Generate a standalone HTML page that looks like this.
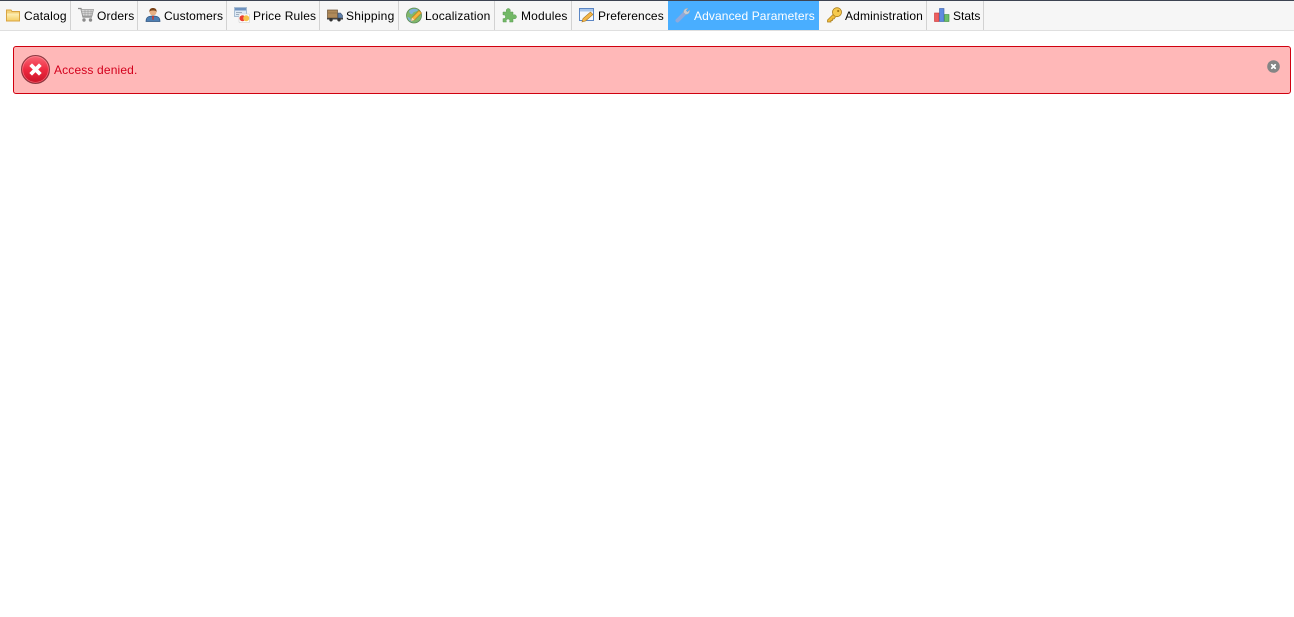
<!DOCTYPE html>
<html><head><meta charset="utf-8"><style>
html,body{margin:0;padding:0;background:#fff;width:1294px;height:617px;overflow:hidden;font-family:"Liberation Sans",sans-serif}
#bar{position:absolute;left:0;top:0;width:1294px;background:#f6f6f6;border-top:1px solid #3d4452;border-bottom:1px solid #dfdfdf;box-sizing:content-box;height:29px}
.t{position:absolute;top:9px;font-size:12px;line-height:14px;color:#000;white-space:nowrap;letter-spacing:.12px}
.s{position:absolute;top:1px;width:1px;height:29px;background:#d2d2d2}
#act{position:absolute;left:668px;top:1px;width:151px;height:29px;background:#49aeff}
svg{position:absolute}
#err{position:absolute;left:13px;top:46px;width:1278px;height:48px;box-sizing:border-box;background:#ffb8b8;border:1px solid #d0000f;border-radius:3px}
#msg{position:absolute;left:54px;top:63px;font-size:12px;line-height:15px;color:#d3001c;white-space:nowrap;letter-spacing:.15px}
</style></head><body>
<div id="bar"></div>
<div id="act"></div>
<div class="s" style="left:70px"></div><div class="s" style="left:137px"></div><div class="s" style="left:226px"></div><div class="s" style="left:319px"></div><div class="s" style="left:398px"></div><div class="s" style="left:494px"></div><div class="s" style="left:571px"></div><div class="s" style="left:926px"></div><div class="s" style="left:983px"></div>

<!-- folder -->
<svg style="left:5px;top:7px" width="16" height="16" viewBox="0 0 16 16"><defs><linearGradient id="f" x1="0" y1="0" x2="0" y2="1"><stop offset="0" stop-color="#fdf0b8"/><stop offset="1" stop-color="#f5cf68"/></linearGradient></defs><path d="M1.500 3h4.500l1 1.500h7.500v9.500h-13z" fill="#f3d27a" stroke="#d9a441"/><path d="M2 6.500h12v7h-12z" fill="url(#f)"/></svg>
<span class="t" style="left:24px;letter-spacing:.2px">Catalog</span>
<!-- cart -->
<svg style="left:78px;top:7px" width="16" height="16" viewBox="0 0 16 16"><path d="M0 1.500h3l2 8.500h9" fill="none" stroke="#8a8a8a" stroke-width="1.200"/><path d="M3 2.500h12.500L14 9H4.800z" fill="#d6d6d6" stroke="#999" stroke-width=".8"/><path d="M4 4.500h11M4.500 6.500h10M7 3v6M10 3v6M13 3v6" stroke="#999" stroke-width=".6"/><circle cx="6" cy="13" r="1.700" fill="#8a8a8a"/><circle cx="12.500" cy="13" r="1.700" fill="#8a8a8a"/></svg>
<span class="t" style="left:97px">Orders</span>
<!-- customer -->
<svg style="left:145px;top:7px" width="16" height="16" viewBox="0 0 16 16"><path d="M1 14.500c0-4 2-5.500 7-5.500s7 1.500 7 5.500z" fill="#4d7fb3" stroke="#2f5480" stroke-width=".7"/><path d="M7 9h2l-.500 4h-1z" fill="#c8382c"/><circle cx="8" cy="5" r="3.500" fill="#e9b184"/><path d="M4.300 5c0-3 1.500-4 3.700-4s3.700 1 3.700 4c-1.200-1.500-2-1.500-3.700-1.500S5.500 3.500 4.300 5z" fill="#7a4318"/></svg>
<span class="t" style="left:164px">Customers</span>
<!-- price rules -->
<svg style="left:234px;top:7px" width="16" height="16" viewBox="0 0 16 16"><rect x=".5" y=".5" width="12" height="9" fill="#dfeaf5" stroke="#8aa5c4" stroke-width=".7"/><rect x="1" y="1" width="11" height="2.500" fill="#6f93c0"/><path d="M2 5.500h6M2 7.500h4" stroke="#89a" stroke-width=".8"/><rect x="5" y="7" width="10.500" height="8.500" rx="1" fill="#fff" stroke="#ccc" stroke-width=".6"/><circle cx="8.500" cy="11.200" r="3" fill="#ea3f33"/><circle cx="12.200" cy="11.200" r="3" fill="#f5c24a"/></svg>
<span class="t" style="left:253px;letter-spacing:.17px">Price Rules</span>
<!-- truck -->
<svg style="left:327px;top:7px" width="16" height="16" viewBox="0 0 16 16"><rect x=".5" y="3" width="10" height="8" fill="#b08a5a" stroke="#6b5235" stroke-width=".7"/><path d="M.5 6h10" stroke="#8a6a42" stroke-width=".7"/><path d="M11 6h2.500l2 2.500V11H11z" fill="#5f7fa8" stroke="#3c4f6b" stroke-width=".6"/><rect x="0" y="11" width="16" height="1.500" fill="#444"/><circle cx="4" cy="12.800" r="1.700" fill="#333"/><circle cx="12" cy="12.800" r="1.700" fill="#333"/></svg>
<span class="t" style="left:346px;letter-spacing:.22px">Shipping</span>
<!-- globe -->
<svg style="left:406px;top:7px" width="17" height="17" viewBox="0 0 17 17"><circle cx="8" cy="8.500" r="7.500" fill="#7fb86a" stroke="#5e8a5a" stroke-width=".8"/><path d="M3 4c2-2 6-3 9-1-1 2-4 1-5 3S4 8 3 4zM1.500 10c2 0 3 2 5 5-3-.5-4.500-2.500-5-5z" fill="#7fb2dc"/><path d="M5 14l1-3.500 7-7 2.500 2.500-7 7z" fill="#f4b53c" stroke="#b07a1e" stroke-width=".6"/><path d="M5 14l1-3.500 2.500 2.500z" fill="#f3dcb8"/></svg>
<span class="t" style="left:425px;letter-spacing:.17px">Localization</span>
<!-- puzzle -->
<svg style="left:502px;top:7px" width="16" height="16" viewBox="0 0 16 16"><path d="M1 5h3.500c-.8-2 .2-3.500 1.800-3.500S8.800 3 8 5h3v3c2-.8 3.500.2 3.500 1.800S13 12.300 11 11.500V15H7.500c.8-1.800-.2-3-1.500-3s-2.300 1.200-1.500 3H1v-3.500c1.500.5 2.500-.5 2.500-1.700S2.500 7.500 1 8z" fill="#72b866" stroke="#5a9a52" stroke-width=".5"/></svg>
<span class="t" style="left:521px;letter-spacing:.18px">Modules</span>
<!-- preferences -->
<svg style="left:579px;top:7px" width="16" height="16" viewBox="0 0 16 16"><rect x=".5" y="1.500" width="14" height="12" fill="#f4f8fd" stroke="#5b86c4"/><rect x="1" y="2" width="13" height="2.500" fill="#a9c6ec"/><path d="M3 15l1-3.500 7.500-6.500 2.500 2.500L6.500 14z" fill="#f3b648" stroke="#a9751f" stroke-width=".6"/></svg>
<span class="t" style="left:598px;letter-spacing:.1px">Preferences</span>
<!-- wrench -->
<svg style="left:675px;top:7px" width="16" height="16" viewBox="0 0 16 16"><path d="M2.500 13.500l7-7" stroke="#8fa9dc" stroke-width="4" stroke-linecap="round"/><path d="M8.500 5.500C8.500 2.800 10.500 1 13 1.500L11 3.500 12.500 5l2-2c.6 2.500-1.200 4.500-3.800 4.500z" fill="#c8ccd2" stroke="#a2a6ad" stroke-width=".5"/></svg>
<span class="t" style="left:694px;color:#fff;letter-spacing:.11px">Advanced Parameters</span>
<!-- key -->
<svg style="left:826px;top:7px" width="17" height="16" viewBox="0 0 17 16"><path d="M7.500 7L1.500 13v2H5v-1.500h1.500V12H8l1.500-2" fill="#f0bc3c" stroke="#a87a15" stroke-width=".7"/><circle cx="11" cy="5.200" r="4.500" fill="#f6ca4f" stroke="#a87a15" stroke-width=".8"/><circle cx="12.200" cy="4" r="1.100" fill="#a87a15"/></svg>
<span class="t" style="left:845px;letter-spacing:.14px">Administration</span>
<!-- stats -->
<svg style="left:934px;top:7px" width="16" height="16" viewBox="0 0 16 16"><rect x=".5" y="6" width="4.500" height="8.500" fill="#ec5f5f" stroke="#c33" stroke-width=".6"/><rect x="5.500" y="1.500" width="4.500" height="13" fill="#5f8be0" stroke="#3a5fa8" stroke-width=".6"/><rect x="10.500" y="7.500" width="4.500" height="7" fill="#6cc06a" stroke="#3f8a3f" stroke-width=".6"/></svg>
<span class="t" style="left:953px;letter-spacing:0">Stats</span>

<div id="err"></div>
<svg style="left:21px;top:55px" width="29" height="29" viewBox="0 0 29 29"><defs><linearGradient id="g" x1="0" y1="0" x2="0" y2="1"><stop offset="0" stop-color="#f86a78"/><stop offset=".5" stop-color="#ef2a40"/><stop offset="1" stop-color="#c81226"/></linearGradient></defs><circle cx="14.500" cy="14.500" r="14" fill="url(#g)" stroke="#8a3a42" stroke-width="1"/><circle cx="14.500" cy="14.500" r="12.800" fill="none" stroke="#ff9aa4" stroke-width=".6" opacity=".7"/><path d="M11 11l7 7M18 11l-7 7" stroke="#fff" stroke-width="3.800" stroke-linecap="square"/></svg>
<div id="msg">Access denied.</div>
<svg style="left:1267px;top:60px" width="13" height="13" viewBox="0 0 13 13"><circle cx="6.500" cy="6.500" r="6.300" fill="#858585"/><path d="M4.800 4.800l3.400 3.400M8.200 4.800l-3.400 3.400" stroke="#fff" stroke-width="1.800" stroke-linecap="round"/></svg>
</body></html>
